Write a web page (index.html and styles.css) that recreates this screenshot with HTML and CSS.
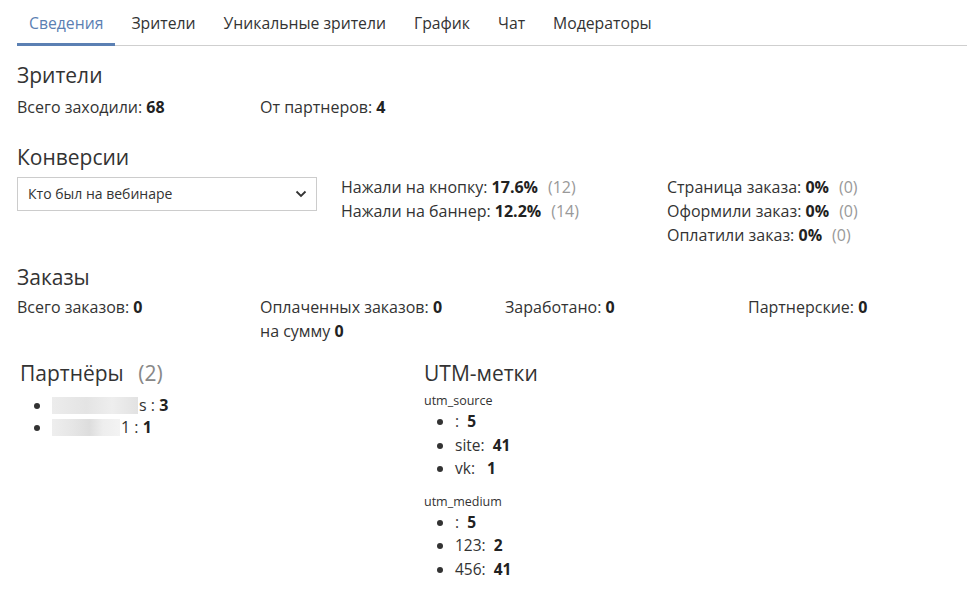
FILE: index.html
```html
<!DOCTYPE html>
<html lang="ru">
<head>
<meta charset="utf-8">
<link rel="stylesheet" href="styles.css">
</head>
<body>
<div class="page">
  <nav class="tabs">
    <a class="tab active">Сведения</a>
    <a class="tab">Зрители</a>
    <a class="tab">Уникальные зрители</a>
    <a class="tab">График</a>
    <a class="tab">Чат</a>
    <a class="tab">Модераторы</a>
  </nav>

  <section class="viewers">
    <h2 class="h">Зрители</h2>
    <div class="grid4">
      <div>Всего заходили: <b>68</b></div>
      <div>От партнеров: <b>4</b></div>
    </div>
  </section>

  <section class="conv">
    <h2 class="h">Конверсии</h2>
    <div class="conv-row">
      <div class="select">
        <span>Кто был на вебинаре</span>
        <svg class="chev" width="12" height="8" viewBox="0 0 12 8"><path d="M1.5 1.5 L6 6 L10.5 1.5" fill="none" stroke="#333" stroke-width="1.8"/></svg>
      </div>
      <div class="conv-col c1">
        <div>Нажали на кнопку: <b>17.6%</b><span class="cnt">(12)</span></div>
        <div>Нажали на баннер: <b>12.2%</b><span class="cnt">(14)</span></div>
      </div>
      <div class="conv-col c2">
        <div>Страница заказа: <b>0%</b><span class="cnt">(0)</span></div>
        <div>Оформили заказ: <b>0%</b><span class="cnt">(0)</span></div>
        <div>Оплатили заказ: <b>0%</b><span class="cnt">(0)</span></div>
      </div>
    </div>
  </section>

  <section class="orders">
    <h2 class="h">Заказы</h2>
    <div class="grid4 lh24">
      <div>Всего заказов: <b>0</b></div>
      <div>Оплаченных заказов: <b>0</b><br>на сумму <b>0</b></div>
      <div>Заработано: <b>0</b></div>
      <div>Партнерские: <b>0</b></div>
    </div>
  </section>

  <section class="bottom">
    <div class="partners">
      <h2 class="h">Партнёры <span class="cnt2">(2)</span></h2>
      <ul class="plist">
        <li><span class="blur b1"></span>s : <b>3</b></li>
        <li><span class="blur b2"></span>1 : <b>1</b></li>
      </ul>
    </div>
    <div class="utm">
      <h2 class="h">UTM-метки</h2>
      <div class="utm-key">utm_source</div>
      <ul class="ulist">
        <li>:&nbsp;&nbsp;<b>5</b></li>
        <li>site:&nbsp;&nbsp;<b>41</b></li>
        <li>vk:&nbsp;&nbsp;&nbsp;<b>1</b></li>
      </ul>
      <div class="utm-key k2">utm_medium</div>
      <ul class="ulist">
        <li>:&nbsp;&nbsp;<b>5</b></li>
        <li>123:&nbsp;&nbsp;<b>2</b></li>
        <li>456:&nbsp;&nbsp;<b>41</b></li>
      </ul>
    </div>
  </section>
</div>
</body>
</html>
```

FILE: styles.css
```css
* { box-sizing: border-box; }
html, body { margin: 0; padding: 0; background: #fff; }
body {
  font-family: "Open Sans", "Noto Sans", sans-serif;
  font-size: 16px;
  line-height: 20px;
  color: #333;
}
b { font-weight: 700; color: #222; }
.page { padding: 0 10px 0 17px; }

.tabs {
  display: flex;
  border-bottom: 1px solid #cfcfcf;
  height: 46px;
}
.tab {
  display: block;
  padding: 12px 12px 0;
  margin-right: 4px;
  font-size: 15.75px;
  line-height: 22px;
  color: #333;
  height: 46px;
}
.tab.active {
  color: #5b80b3;
  border-bottom: 3px solid #5b80b3;
}

.h {
  margin: 0;
  font-size: 21px;
  font-weight: 400;
  line-height: 26px;
  color: #333;
}
.grid4 {
  display: grid;
  grid-template-columns: 243px 245px 243px 243px;
}
.lh24 { line-height: 24px; }

.viewers { margin-top: 16px; }
.viewers .h { margin-bottom: 9px; }

.conv { margin-top: 27px; }
.conv .h { margin-bottom: 5px; }
.conv-row { display: flex; }
.select {
  width: 300px;
  height: 34px;
  margin-top: 2px;
  border: 1px solid #ccc;
  display: flex;
  align-items: center;
  justify-content: space-between;
  padding: 0 9px 0 10px;
  font-size: 14px;
}
.chev { display: block; }
.conv-col { line-height: 24px; }
.c1 { margin-left: 24px; width: 326px; }
.cnt { color: #999; margin-left: 10px; }

.orders { margin-top: 17px; }
.orders .h { margin-bottom: 5px; }

.bottom { display: flex; margin-top: 17px; padding-bottom: 10px; }
.partners { width: 407px; padding-left: 3px; }
.cnt2 { color: #888; margin-left: 9px; }
.plist {
  margin: 8px 0 0;
  padding-left: 32px;
  line-height: 22px;
}
.blur {
  display: inline-block;
  height: 17px;
  vertical-align: -3px;
  background: linear-gradient(90deg, #ececec, #e4e4e4 40%, #eee 70%, #e2e2e2);
}
.b1 { width: 86px; margin-right: 1px; }
.b2 { width: 68px; margin-right: 1px; background: linear-gradient(90deg, #eee, #e6e6e6 30%, #ddd 55%, #eee 75%, #f3f3f3); }

.utm { flex: 1; }
.utm-key { font-size: 12.5px; line-height: 18px; margin-top: 6px; }
.utm-key.k2 { margin-top: 12px; }
.ulist {
  margin: 0;
  padding-left: 31px;
  line-height: 23.5px;
  font-size: 15.5px;
}
```
